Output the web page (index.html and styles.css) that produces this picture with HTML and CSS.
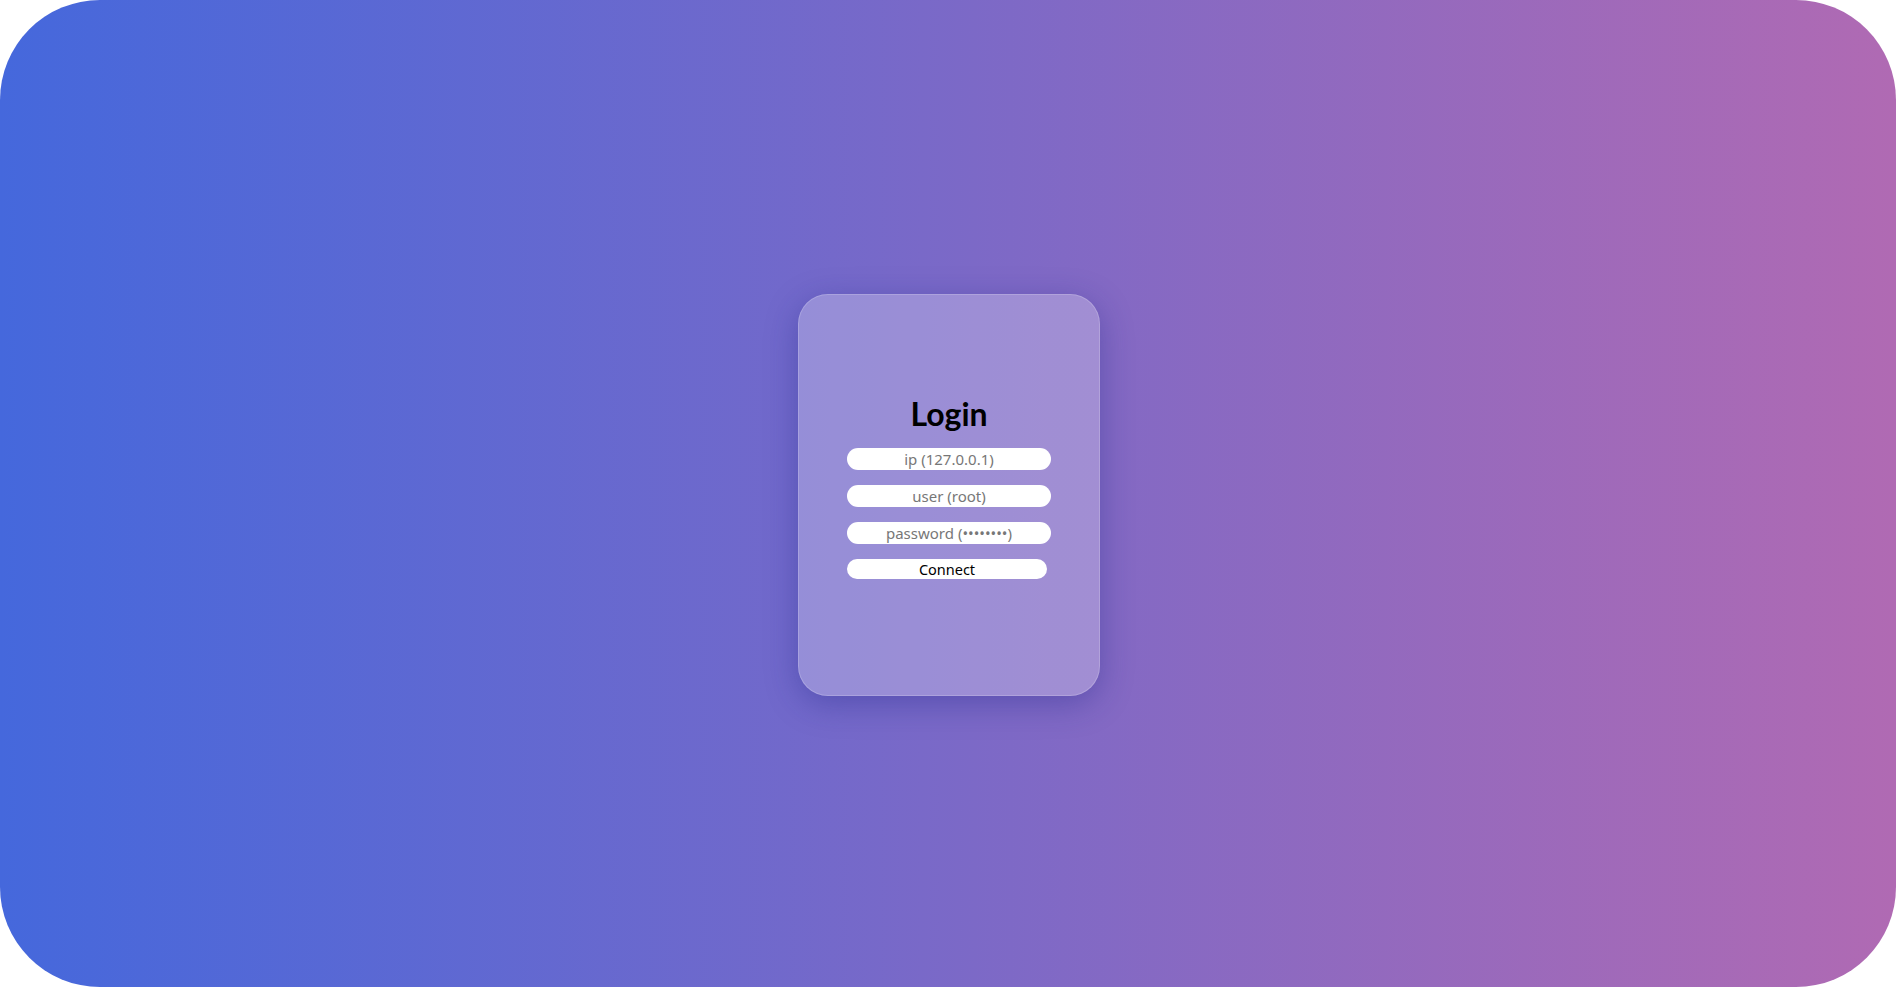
FILE: index.html
```html
<!DOCTYPE html>
<html lang="en">
<head>
<meta charset="utf-8">
<title>Login</title>
<link rel="stylesheet" href="styles.css">
</head>
<body>
  <div class="card">
    <h1 class="title">Login</h1>
    <form class="form">
      <input class="field" type="text" placeholder="ip (127.0.0.1)">
      <input class="field" type="text" placeholder="user (root)">
      <input class="field" type="password" placeholder="password (••••••••)">
      <button class="connect" type="button">Connect</button>
    </form>
  </div>
</body>
</html>
```
FILE: styles.css
```css
html {
  background: #ffffff;
  height: 100%;
}
body {
  margin: 0;
  height: 100vh;
  border-radius: 100px;
  background: linear-gradient(to right, #4568dc, #b06ab3);
  display: flex;
  align-items: center;
  justify-content: center;
  font-family: "Noto Sans", "DejaVu Sans", sans-serif;
}
.card {
  box-sizing: border-box;
  width: 302px;
  height: 402px;
  margin-left: 2px;
  margin-top: 3px;
  border-radius: 30px;
  border: 1px solid rgba(255, 255, 255, 0.18);
  background: rgba(255, 255, 255, 0.25);
  box-shadow: 0 8px 32px 0 rgba(31, 38, 135, 0.37);
  display: flex;
  flex-direction: column;
  align-items: center;
  justify-content: center;
  padding-bottom: 16px;
}
.title {
  margin: 0 0 16px;
  font-family: "Lato", "Noto Sans", sans-serif;
  font-weight: 700;
  font-size: 32px;
  line-height: 36px;
  color: #000;
}
.form {
  width: 204px;
  display: flex;
  flex-direction: column;
  align-items: flex-start;
  gap: 15px;
  margin: 0;
}
.field {
  box-sizing: border-box;
  width: 204px;
  height: 22px;
  border: none;
  border-radius: 11px;
  background: #fff;
  padding: 0 8px;
  font-family: "Noto Sans", sans-serif;
  font-size: 15px;
  line-height: 22px;
  text-align: center;
  color: #333;
  outline: none;
}
.field::placeholder {
  color: #777;
}
.connect {
  box-sizing: border-box;
  width: 200px;
  height: 20px;
  border: none;
  border-radius: 10px;
  background: #fff;
  padding: 0;
  font-family: "Noto Sans", sans-serif;
  font-size: 14.5px;
  line-height: 20px;
  color: #000;
}
```
